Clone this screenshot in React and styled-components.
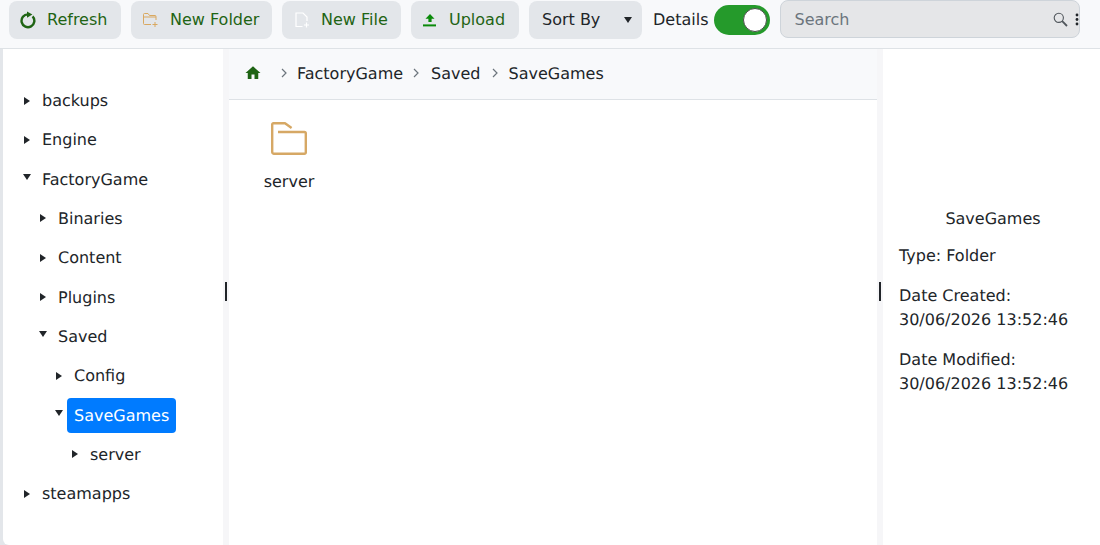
import React from "react";
import styled, { createGlobalStyle } from "styled-components";
import { MdHome } from "react-icons/md";

const GlobalStyle = createGlobalStyle`
  html, body {
    margin: 0;
    padding: 0;
    height: 100%;
    overflow: hidden;
    background: #e3e6ea;
  }
  * {
    box-sizing: border-box;
  }
`;

const Page = styled.div`
  width: 1100px;
  height: 545px;
  padding-left: 3px;
  display: flex;
  flex-direction: column;
  font-family: "DejaVu Sans", sans-serif;
  font-size: 16px;
  text-rendering: geometricPrecision;
  color: #212529;
  background: #e3e6ea;
`;

const Toolbar = styled.div`
  height: 49px;
  flex: none;
  margin-left: -3px;
  padding-left: 9px;
  display: flex;
  align-items: flex-start;
  background: #f8f9fb;
  border-bottom: 1px solid #dee2e6;
`;

const ToolButton = styled.button`
  height: 38px;
  width: ${({ $w }) => $w}px;
  margin: 1px 10px 0 0;
  padding: 0 0 0 11px;
  display: flex;
  align-items: center;
  gap: ${({ $gap }) => $gap}px;
  border: 0;
  border-radius: 8px;
  background: #e3e6ea;
  color: #1f6414;
  font: inherit;
`;

const ButtonLabel = styled.span`
  margin-bottom: 2px;
`;

const SortButton = styled(ToolButton)`
  color: #212529;
  padding: 0 10px 0 13px;
  justify-content: space-between;
  margin-right: 11px;
`;

const Caret = styled.span`
  width: 0;
  height: 0;
  border-left: 4px solid transparent;
  border-right: 4px solid transparent;
  border-top: 6px solid #212529;
`;

const DetailsLabel = styled.span`
  height: 38px;
  line-height: 40px;
  margin-right: 6px;
`;

const Toggle = styled.div`
  width: 56px;
  height: 30px;
  margin: 5px 10px 0 0;
  padding-right: 3px;
  display: flex;
  align-items: center;
  justify-content: flex-end;
  border-radius: 15px;
  background: #259a2b;
`;

const Knob = styled.div`
  width: 24px;
  height: 24px;
  border-radius: 50%;
  background: #fff;
  border: 1px solid #4a4f4a;
`;

const SearchBox = styled.div`
  position: relative;
  width: 300px;
  height: 38px;
`;

const SearchInput = styled.input`
  width: 100%;
  height: 100%;
  padding: 0 50px 0 13px;
  border: 1px solid #ced4da;
  border-radius: 8px;
  background: #e5e6e8;
  font: inherit;
  outline: none;
  &::placeholder {
    color: #6c757d;
    opacity: 1;
  }
`;

const SearchIcon = styled.svg`
  position: absolute;
  left: 273px;
  top: 12px;
`;

const Kebab = styled.svg`
  position: absolute;
  left: 295px;
  top: 13px;
`;

const Body = styled.div`
  flex: 1;
  min-height: 0;
  display: flex;
  background: #fff;
  border-bottom-left-radius: 6px;
  overflow: hidden;
`;

const TreePane = styled.div`
  width: 220px;
  flex: none;
  padding: 34px 0 0 16px;
`;

const TreeRow = styled.div`
  height: 35px;
  margin-bottom: 4.33px;
  padding-left: ${({ $level }) => $level * 16}px;
  display: flex;
  align-items: center;
`;

const ArrowSlot = styled.span`
  width: 16px;
  height: 35px;
  flex: none;
  display: flex;
  align-items: center;
  padding-left: ${({ $open }) => ($open ? "4px" : "5px")};
  padding-bottom: ${({ $open }) => ($open ? "4px" : "0")};
`;

const ArrowRight = styled.span`
  width: 0;
  height: 0;
  border-top: 4.5px solid transparent;
  border-bottom: 4.5px solid transparent;
  border-left: 6px solid #212529;
`;

const ArrowDown = styled.span`
  width: 0;
  height: 0;
  border-left: 4.5px solid transparent;
  border-right: 4.5px solid transparent;
  border-top: 6px solid #212529;
`;

const TreeLabel = styled.span`
  height: 35px;
  line-height: 35px;
  padding: 0 7px;
  border-radius: 4px;
  background: ${({ $active }) => ($active ? "#007bff" : "transparent")};
  color: ${({ $active }) => ($active ? "#fff" : "#212529")};
`;

const Gutter = styled.div`
  width: 6px;
  flex: none;
  padding-bottom: 11px;
  display: flex;
  align-items: center;
  justify-content: center;
  background: #f6f6f8;
`;

const GutterBar = styled.div`
  width: 2px;
  height: 19px;
  background: #212529;
`;

const MainPane = styled.div`
  width: 648px;
  flex: none;
  display: flex;
  flex-direction: column;
`;

const Breadcrumb = styled.div`
  height: 51px;
  flex: none;
  padding: 0 0 2px 15px;
  display: flex;
  align-items: center;
  background: #f8f9fb;
  border-bottom: 1px solid #dee2e6;
`;

const Crumb = styled.span`
  color: #212529;
`;

const CrumbSep = styled.span`
  width: ${({ $w }) => $w}px;
  padding-left: ${({ $shift }) => $shift || 0}px;
  padding-right: ${({ $pull }) => $pull || 0}px;
  display: flex;
  justify-content: center;
`;

const Files = styled.div`
  padding: 22px 0 0 24px;
  display: flex;
`;

const FileItem = styled.div`
  width: 72px;
  display: flex;
  flex-direction: column;
  align-items: center;
  gap: 17px;
`;

const FileName = styled.span`
  line-height: 18px;
`;

const DetailsPane = styled.div`
  flex: 1;
  padding: 158px 16px 0;
  line-height: 24px;
`;

const DetailsTitle = styled.div`
  padding-left: 3px;
  text-align: center;
  margin-bottom: 13px;
`;

const DetailsLine = styled.div`
  margin-bottom: 16px;
`;

const RefreshIcon = () => (
  <svg width="16" height="18" viewBox="0 0 16 18" fill="none">
    <path d="M8 3.4A6.4 6.4 0 1 0 12.6 5.4" stroke="#1f6414" strokeWidth="2.4" />
    <path d="M7 .4 12.4 3.6 7 6.8Z" fill="#1f6414" />
  </svg>
);

const NewFolderIcon = () => (
  <svg width="16" height="14" viewBox="-1 0 16 14" fill="none" stroke="#d9a860" strokeWidth="1">
    <path d="M8 11.5H1.5A1 1 0 0 1 .5 10.5V1.5A1 1 0 0 1 1.5.5H5L6.5 2.5H12A1 1 0 0 1 13 3.5V7" />
    <path d="M.5 4H13" />
    <path d="M12 9V14M9.5 11.5H14.5" />
  </svg>
);

const NewFileIcon = () => (
  <svg width="16" height="16" viewBox="-1.5 0 16 16" fill="none" stroke="#ffffff" strokeWidth="1.2">
    <path d="M8 14.5H1.5V1H8.5L12.5 5V9" />
    <path d="M12 10.5V15.5M9.5 13H14.5" />
  </svg>
);

const UploadIcon = () => (
  <svg width="14" height="14" viewBox="-1 0 14 14" fill="#0a8a0a">
    <path d="M7 1 11.5 5.8H8.6V9H5.4V5.8H2.5Z" />
    <rect x="0" y="11.4" width="14" height="2" />
  </svg>
);

const FolderIcon = () => (
  <svg width="36" height="34" viewBox="0 0 36 34" fill="none" stroke="#d6a865" strokeWidth="2.4" strokeLinejoin="round">
    <path d="M1.2 30V2.4A1.2 1.2 0 0 1 2.4 1.2H14L20.6 6" />
    <path d="M7 10H33.4A1.4 1.4 0 0 1 34.8 11.4V30.4A1.4 1.4 0 0 1 33.4 31.8H3A1.8 1.8 0 0 1 1.2 30" />
  </svg>
);

const Chevron = () => (
  <svg width="6" height="10" viewBox="0 0 6 10" fill="none" stroke="#6c757d" strokeWidth="1.2">
    <path d="M1 1 5 5 1 9" />
  </svg>
);

const treeItems = [
  { name: "backups", level: 0 },
  { name: "Engine", level: 0 },
  { name: "FactoryGame", level: 0, open: true },
  { name: "Binaries", level: 1 },
  { name: "Content", level: 1 },
  { name: "Plugins", level: 1 },
  { name: "Saved", level: 1, open: true },
  { name: "Config", level: 2 },
  { name: "SaveGames", level: 2, open: true, active: true },
  { name: "server", level: 3 },
  { name: "steamapps", level: 0 },
];

export default function App() {
  return (
    <>
      <GlobalStyle />
      <Page>
        <Toolbar>
          <ToolButton $w={112} $gap={11}>
            <RefreshIcon />
            <ButtonLabel>Refresh</ButtonLabel>
          </ToolButton>
          <ToolButton $w={141} $gap={12}>
            <NewFolderIcon />
            <ButtonLabel>New Folder</ButtonLabel>
          </ToolButton>
          <ToolButton $w={119} $gap={12}>
            <NewFileIcon />
            <ButtonLabel>New File</ButtonLabel>
          </ToolButton>
          <ToolButton $w={108} $gap={13}>
            <UploadIcon />
            <ButtonLabel>Upload</ButtonLabel>
          </ToolButton>
          <SortButton $w={113}>
            <ButtonLabel>Sort By</ButtonLabel>
            <Caret />
          </SortButton>
          <DetailsLabel>Details</DetailsLabel>
          <Toggle>
            <Knob />
          </Toggle>
          <SearchBox>
            <SearchInput placeholder="Search" readOnly />
            <SearchIcon width="15" height="15" viewBox="0 0 15 15" fill="none" stroke="#50565c" strokeWidth="1.1">
              <circle cx="5.8" cy="5.8" r="4.6" />
              <path d="M9.2 9.2 14 14" strokeWidth="1.8" />
            </SearchIcon>
            <Kebab width="4" height="13" viewBox="0 0 4 13" fill="#212529">
              <circle cx="2" cy="2" r="1.4" />
              <circle cx="2" cy="6.5" r="1.4" />
              <circle cx="2" cy="11" r="1.4" />
            </Kebab>
          </SearchBox>
        </Toolbar>
        <Body>
          <TreePane>
            {treeItems.map((item) => (
              <TreeRow key={item.name} $level={item.level}>
                <ArrowSlot $open={item.open}>
                  {item.open ? <ArrowDown /> : <ArrowRight />}
                </ArrowSlot>
                <TreeLabel $active={item.active}>{item.name}</TreeLabel>
              </TreeRow>
            ))}
          </TreePane>
          <Gutter>
            <GutterBar />
          </Gutter>
          <MainPane>
            <Breadcrumb>
              <MdHome size={18} color="#1f6414" />
              <CrumbSep $w={35} $shift={9}>
                <Chevron />
              </CrumbSep>
              <Crumb>FactoryGame</Crumb>
              <CrumbSep $w={28} $pull={2}>
                <Chevron />
              </CrumbSep>
              <Crumb>Saved</Crumb>
              <CrumbSep $w={28}>
                <Chevron />
              </CrumbSep>
              <Crumb>SaveGames</Crumb>
            </Breadcrumb>
            <Files>
              <FileItem>
                <FolderIcon />
                <FileName>server</FileName>
              </FileItem>
            </Files>
          </MainPane>
          <Gutter>
            <GutterBar />
          </Gutter>
          <DetailsPane>
            <DetailsTitle>SaveGames</DetailsTitle>
            <DetailsLine>Type: Folder</DetailsLine>
            <DetailsLine>
              Date Created:
              <br />
              30/06/2026 13:52:46
            </DetailsLine>
            <DetailsLine>
              Date Modified:
              <br />
              30/06/2026 13:52:46
            </DetailsLine>
          </DetailsPane>
        </Body>
      </Page>
    </>
  );
}
